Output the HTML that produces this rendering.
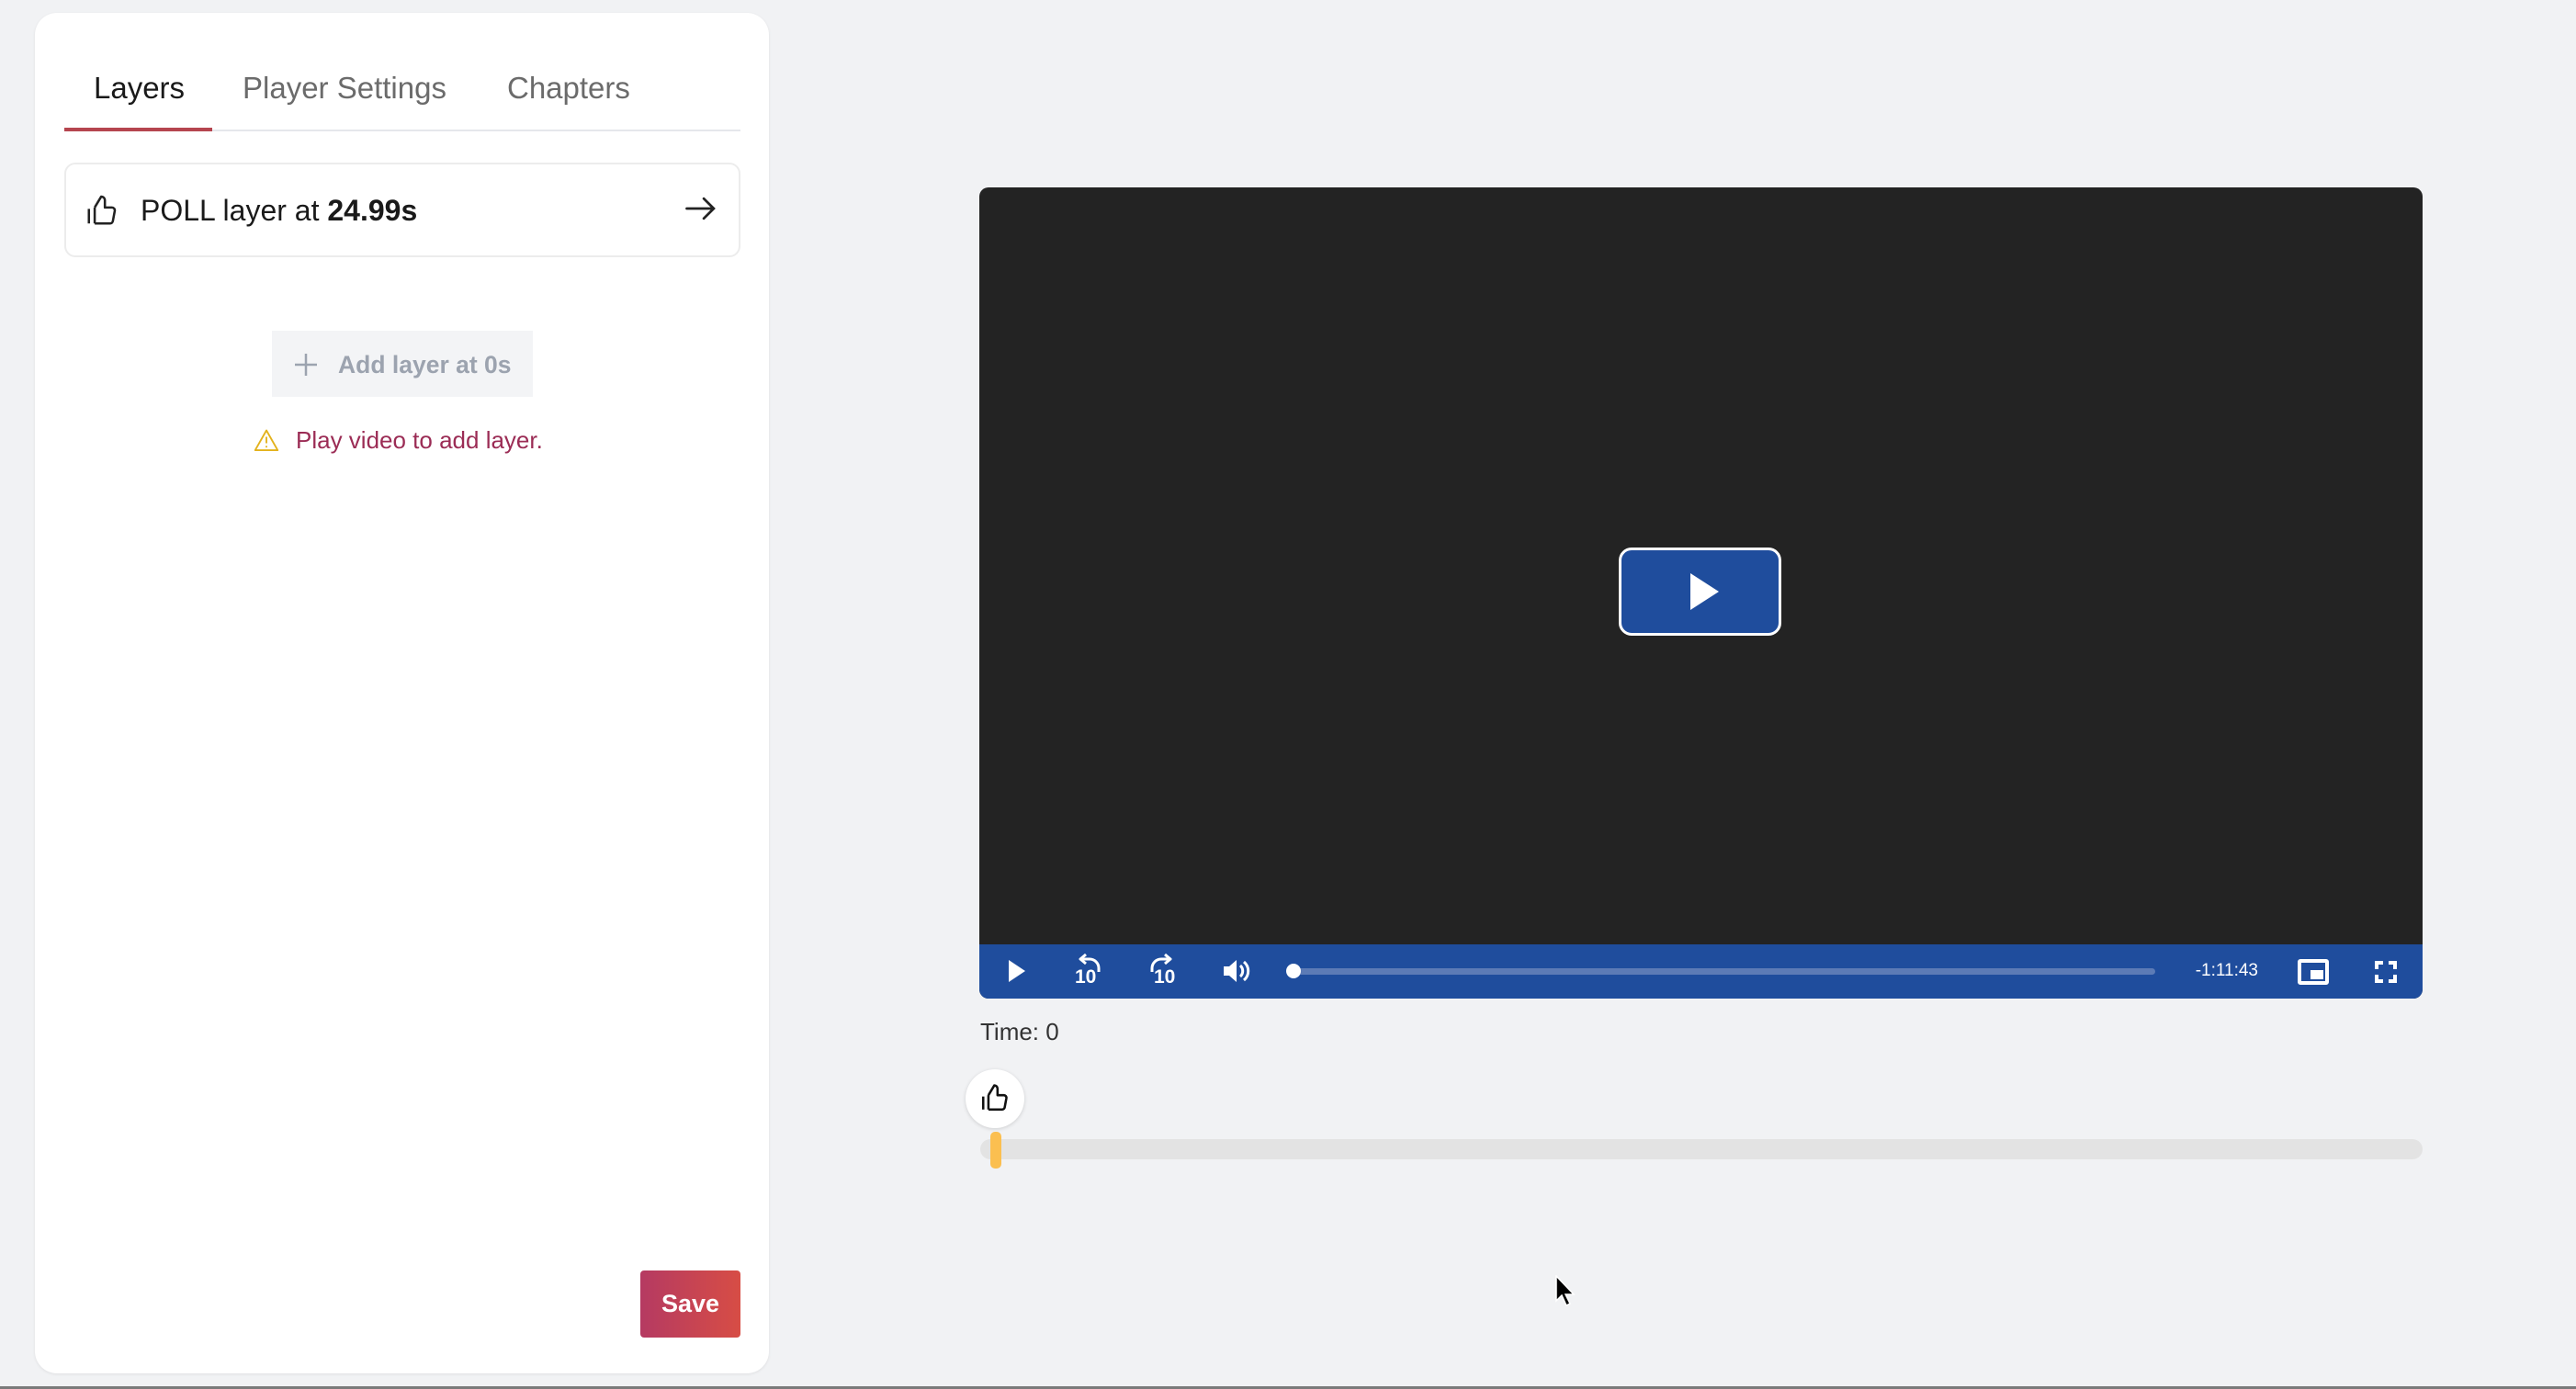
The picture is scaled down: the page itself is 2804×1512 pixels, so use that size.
<!DOCTYPE html>
<html><head><meta charset="utf-8"><style>
*{box-sizing:border-box;margin:0;padding:0}
body{width:2804px;height:1512px;background:#f1f2f4;position:relative;overflow:hidden;font-family:"Liberation Sans",sans-serif}
.abs{position:absolute}
</style></head><body>
<div class="abs" style="left:38px;top:14px;width:799px;height:1481px;background:#fff;border-radius:24px;box-shadow:0 1px 3px rgba(0,0,0,.08)"></div>
<div class="abs" style="left:102px;top:77px;font-size:33px;color:#1a1a1a">Layers</div>
<div class="abs" style="left:264px;top:77px;font-size:33px;color:#6b6b6b">Player Settings</div>
<div class="abs" style="left:552px;top:77px;font-size:33px;color:#6b6b6b">Chapters</div>
<div class="abs" style="left:70px;top:141px;width:736px;height:2px;background:#e5e7eb"></div>
<div class="abs" style="left:70px;top:139px;width:161px;height:4px;background:#b5454f"></div>
<div class="abs" style="left:70px;top:177px;width:736px;height:103px;border:2px solid #ececec;border-radius:12px"></div>
<svg class="abs" style="left:92px;top:210px" width="38" height="38" viewBox="0 0 24 24" fill="none" stroke="#222" stroke-width="1.6" stroke-linejoin="round"><path d="M7 10v11M3 11v10M7 21h10.5a2 2 0 0 0 2-1.7l1.3-7A2 2 0 0 0 18.8 10H14V5a2.5 2.5 0 0 0-2.5-2.5L7 10"/></svg>
<div class="abs" style="left:153px;top:211px;font-size:32px;color:#1a1a1a">POLL layer at <b>24.99s</b></div>
<svg class="abs" style="left:744px;top:210px" width="38" height="34" viewBox="0 0 24 22" fill="none" stroke="#222" stroke-width="1.8" stroke-linecap="round"><path d="M2 11h19M14 4l7 7-7 7"/></svg>
<div class="abs" style="left:296px;top:360px;width:284px;height:72px;background:#f3f4f6"></div>
<svg class="abs" style="left:320px;top:384px" width="26" height="26" viewBox="0 0 26 26" stroke="#9ca3af" stroke-width="2.5"><path d="M13 1v24M1 13h24"/></svg>
<div class="abs" style="left:368px;top:382px;font-size:26.5px;font-weight:bold;color:#9ca3af">Add layer at 0s</div>
<svg class="abs" style="left:276px;top:466px" width="28" height="26" viewBox="0 0 24 22" fill="none" stroke="#e3b21c" stroke-width="1.6" stroke-linejoin="round"><path d="M12 2L1.5 20.5h21z"/><path d="M12 8v6M12 16.5v1.5"/></svg>
<div class="abs" style="left:322px;top:464px;font-size:26px;color:#9b2c55">Play video to add layer.</div>
<div class="abs" style="left:697px;top:1383px;width:109px;height:73px;border-radius:4px;background:linear-gradient(90deg,#b53a62,#d74d45);color:#fff;font-weight:bold;font-size:27px;text-align:center;line-height:73px">Save</div>

<div class="abs" style="left:1066px;top:204px;width:1571px;height:883px;background:#232323;border-radius:10px;overflow:hidden">
 <div class="abs" style="left:0;top:824px;width:1571px;height:59px;background:#1f4d9d"></div>
</div>
<div class="abs" style="left:1762px;top:596px;width:177px;height:96px;background:#1f4d9d;border:3px solid #fff;border-radius:14px"></div>
<svg class="abs" style="left:1840px;top:624px" width="32" height="40"><path d="M0 0L31 20L0 40Z" fill="#fff"/></svg>
<svg class="abs" style="left:1098px;top:1045px" width="20" height="24"><path d="M0 0L18 12L0 24Z" fill="#fff"/></svg>
<svg class="abs" style="left:1168px;top:1038px" width="36" height="40" viewBox="0 0 36 40" fill="none" stroke="#fff" stroke-width="3"><path d="M10 6h8a10 10 0 0 1 10 10v4"/><path d="M14 1l-6 5 6 5" stroke-linejoin="round"/></svg>
<div class="abs" style="left:1170px;top:1052px;color:#fff;font-size:21px;font-weight:bold">10</div>
<svg class="abs" style="left:1246px;top:1038px" width="36" height="40" viewBox="0 0 36 40" fill="none" stroke="#fff" stroke-width="3"><path d="M26 6h-8a10 10 0 0 0-10 10v4"/><path d="M22 1l6 5-6 5" stroke-linejoin="round"/></svg>
<div class="abs" style="left:1256px;top:1052px;color:#fff;font-size:21px;font-weight:bold">10</div>
<svg class="abs" style="left:1330px;top:1043px" width="32" height="28" viewBox="0 0 32 28"><path d="M2 9h6l8-7v24l-8-7H2z" fill="#fff"/><path d="M20 8a8 8 0 0 1 0 12M24 4a13 13 0 0 1 0 20" stroke="#fff" stroke-width="3" fill="none"/></svg>
<div class="abs" style="left:1407px;top:1054px;width:939px;height:7px;background:#5c7bb6;border-radius:4px"></div>
<div class="abs" style="left:1400px;top:1049px;width:16px;height:16px;background:#fff;border-radius:50%"></div>
<div class="abs" style="left:2384px;top:1046px;width:74px;font-size:19px;color:#fff;text-align:right">-1:11:43</div>
<div class="abs" style="left:2501px;top:1044px;width:34px;height:28px;border:4px solid #fff;border-radius:3px"></div>
<div class="abs" style="left:2515px;top:1056px;width:14px;height:10px;background:#fff"></div>
<svg class="abs" style="left:2585px;top:1046px" width="24" height="24" viewBox="0 0 24 24" stroke="#fff" stroke-width="4" fill="none"><path d="M2 9V2h7M15 2h7v7M22 15v7h-7M9 22H2v-7"/></svg>
<div class="abs" style="left:1067px;top:1108px;font-size:26px;color:#333">Time: 0</div>
<div class="abs" style="left:1067px;top:1240px;width:1570px;height:22px;background:#e3e3e3;border-radius:11px"></div>
<div class="abs" style="left:1078px;top:1232px;width:12px;height:40px;background:#fbbf50;border-radius:5px"></div>
<div class="abs" style="left:1051px;top:1164px;width:64px;height:64px;background:#fff;border-radius:50%;box-shadow:0 1px 4px rgba(0,0,0,.15)"></div>
<svg class="abs" style="left:1066px;top:1178px" width="34" height="34" viewBox="0 0 24 24" fill="none" stroke="#111" stroke-width="1.8" stroke-linejoin="round"><path d="M7 10v11M3 11v10M7 21h10.5a2 2 0 0 0 2-1.7l1.3-7A2 2 0 0 0 18.8 10H14V5a2.5 2.5 0 0 0-2.5-2.5L7 10"/></svg>
<svg class="abs" style="left:1693px;top:1388px" width="22" height="34" viewBox="0 0 22 34"><path d="M1 1v27l6-6 5 11 4-2-5-10h9z" fill="#000" stroke="#fff" stroke-width="1.5"/></svg>
<div class="abs" style="left:0;top:1509px;width:2804px;height:3px;background:#7a7a7a"></div>
</body></html>
